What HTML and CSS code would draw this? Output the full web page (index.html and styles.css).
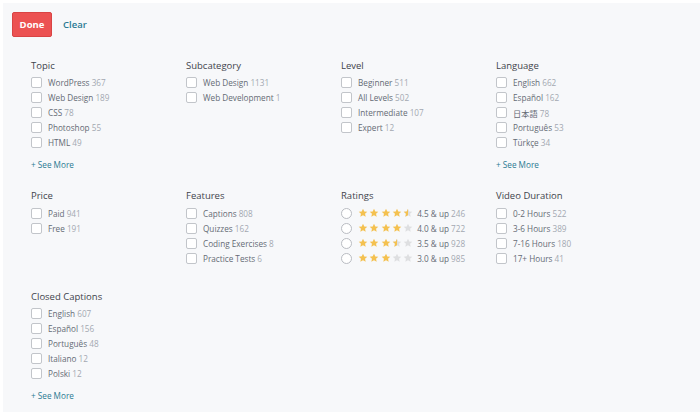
FILE: index.html
```html
<!DOCTYPE html>
<html>
<head>
<meta charset="utf-8">
<link rel="stylesheet" href="styles.css">
</head>
<body>
<svg class="defs" width="0" height="0">
  <defs>
    <symbol id="star" viewBox="0 0 24 24"><path d="M12 1.5l3.1 6.6 7.2.8-5.4 4.9 1.5 7.1L12 17.3l-6.4 3.6 1.5-7.1-5.4-4.9 7.2-.8z"/></symbol>
    <clipPath id="half"><rect x="0" y="0" width="12" height="24"/></clipPath>
  </defs>
</svg>
<div class="panel">
  <div class="actions">
    <button class="btn-done">Done</button>
    <a class="btn-clear">Clear</a>
  </div>
  <div class="grid">
    <div class="section">
      <div class="title">Topic</div>
      <ul class="list">
        <li class="item"><span class="box"></span><span class="label">WordPress <span class="count">367</span></span></li>
        <li class="item"><span class="box"></span><span class="label">Web Design <span class="count">189</span></span></li>
        <li class="item"><span class="box"></span><span class="label">CSS <span class="count">78</span></span></li>
        <li class="item"><span class="box"></span><span class="label">Photoshop <span class="count">55</span></span></li>
        <li class="item"><span class="box"></span><span class="label">HTML <span class="count">49</span></span></li>
      </ul>
      <a class="more">+ See More</a>
    </div>
    <div class="section">
      <div class="title">Subcategory</div>
      <ul class="list">
        <li class="item"><span class="box"></span><span class="label">Web Design <span class="count">1131</span></span></li>
        <li class="item"><span class="box"></span><span class="label">Web Development <span class="count">1</span></span></li>
      </ul>
    </div>
    <div class="section">
      <div class="title">Level</div>
      <ul class="list">
        <li class="item"><span class="box"></span><span class="label">Beginner <span class="count">511</span></span></li>
        <li class="item"><span class="box"></span><span class="label">All Levels <span class="count">502</span></span></li>
        <li class="item"><span class="box"></span><span class="label">Intermediate <span class="count">107</span></span></li>
        <li class="item"><span class="box"></span><span class="label">Expert <span class="count">12</span></span></li>
      </ul>
    </div>
    <div class="section">
      <div class="title">Language</div>
      <ul class="list">
        <li class="item"><span class="box"></span><span class="label">English <span class="count">662</span></span></li>
        <li class="item"><span class="box"></span><span class="label">Español <span class="count">162</span></span></li>
        <li class="item"><span class="box"></span><span class="label">日本語 <span class="count">78</span></span></li>
        <li class="item"><span class="box"></span><span class="label">Português <span class="count">53</span></span></li>
        <li class="item"><span class="box"></span><span class="label">Türkçe <span class="count">34</span></span></li>
      </ul>
      <a class="more">+ See More</a>
    </div>

    <div class="section">
      <div class="title">Price</div>
      <ul class="list">
        <li class="item"><span class="box"></span><span class="label">Paid <span class="count">941</span></span></li>
        <li class="item"><span class="box"></span><span class="label">Free <span class="count">191</span></span></li>
      </ul>
    </div>
    <div class="section">
      <div class="title">Features</div>
      <ul class="list">
        <li class="item"><span class="box"></span><span class="label">Captions <span class="count">808</span></span></li>
        <li class="item"><span class="box"></span><span class="label">Quizzes <span class="count">162</span></span></li>
        <li class="item"><span class="box"></span><span class="label">Coding Exercises <span class="count">8</span></span></li>
        <li class="item"><span class="box"></span><span class="label">Practice Tests <span class="count">6</span></span></li>
      </ul>
    </div>
    <div class="section">
      <div class="title">Ratings</div>
      <ul class="list">
        <li class="item">
          <span class="radio"></span>
          <span class="stars">
            <svg class="star"><use href="#star" class="on"/></svg>
            <svg class="star"><use href="#star" class="on"/></svg>
            <svg class="star"><use href="#star" class="on"/></svg>
            <svg class="star"><use href="#star" class="on"/></svg>
            <svg class="star" viewBox="0 0 24 24"><use href="#star" class="off"/><g clip-path="url(#half)"><use href="#star" class="on"/></g></svg>
          </span>
          <span class="label">4.5 &amp; up <span class="count">246</span></span>
        </li>
        <li class="item">
          <span class="radio"></span>
          <span class="stars">
            <svg class="star"><use href="#star" class="on"/></svg>
            <svg class="star"><use href="#star" class="on"/></svg>
            <svg class="star"><use href="#star" class="on"/></svg>
            <svg class="star"><use href="#star" class="on"/></svg>
            <svg class="star"><use href="#star" class="off"/></svg>
          </span>
          <span class="label">4.0 &amp; up <span class="count">722</span></span>
        </li>
        <li class="item">
          <span class="radio"></span>
          <span class="stars">
            <svg class="star"><use href="#star" class="on"/></svg>
            <svg class="star"><use href="#star" class="on"/></svg>
            <svg class="star"><use href="#star" class="on"/></svg>
            <svg class="star" viewBox="0 0 24 24"><use href="#star" class="off"/><g clip-path="url(#half)"><use href="#star" class="on"/></g></svg>
            <svg class="star"><use href="#star" class="off"/></svg>
          </span>
          <span class="label">3.5 &amp; up <span class="count">928</span></span>
        </li>
        <li class="item">
          <span class="radio"></span>
          <span class="stars">
            <svg class="star"><use href="#star" class="on"/></svg>
            <svg class="star"><use href="#star" class="on"/></svg>
            <svg class="star"><use href="#star" class="on"/></svg>
            <svg class="star"><use href="#star" class="off"/></svg>
            <svg class="star"><use href="#star" class="off"/></svg>
          </span>
          <span class="label">3.0 &amp; up <span class="count">985</span></span>
        </li>
      </ul>
    </div>
    <div class="section">
      <div class="title">Video Duration</div>
      <ul class="list">
        <li class="item"><span class="box"></span><span class="label">0-2 Hours <span class="count">522</span></span></li>
        <li class="item"><span class="box"></span><span class="label">3-6 Hours <span class="count">389</span></span></li>
        <li class="item"><span class="box"></span><span class="label">7-16 Hours <span class="count">180</span></span></li>
        <li class="item"><span class="box"></span><span class="label">17+ Hours <span class="count">41</span></span></li>
      </ul>
    </div>

    <div class="section">
      <div class="title">Closed Captions</div>
      <ul class="list">
        <li class="item"><span class="box"></span><span class="label">English <span class="count">607</span></span></li>
        <li class="item"><span class="box"></span><span class="label">Español <span class="count">156</span></span></li>
        <li class="item"><span class="box"></span><span class="label">Português <span class="count">48</span></span></li>
        <li class="item"><span class="box"></span><span class="label">Italiano <span class="count">12</span></span></li>
        <li class="item"><span class="box"></span><span class="label">Polski <span class="count">12</span></span></li>
      </ul>
      <a class="more">+ See More</a>
    </div>
  </div>
</div>
</body>
</html>
```

FILE: styles.css
```css
html, body {
  margin: 0;
  padding: 0;
  background: #ffffff;
  height: 100%;
}
body {
  font-family: "Open Sans", "Noto Sans CJK JP", sans-serif;
  overflow: hidden;
}
.defs {
  position: absolute;
  width: 0;
  height: 0;
}
.panel {
  margin: 3px 0 0 3px;
  background: #f7f8fa;
  height: calc(100% - 3px);
  box-sizing: border-box;
  padding: 9px 0 0 9px;
}
.actions {
  display: flex;
  align-items: center;
  height: 25px;
}
.btn-done {
  height: 25px;
  width: 40px;
  padding: 0;
  background: #ec5252;
  border: 1px solid #d94444;
  border-radius: 2px;
  color: #ffffff;
  font-family: "Open Sans", sans-serif;
  font-weight: 700;
  font-size: 9.5px;
}
.btn-clear {
  margin-left: 11px;
  color: #2b7a93;
  font-size: 9.5px;
  font-weight: 600;
}
.grid {
  display: grid;
  grid-template-columns: repeat(4, 155px);
  row-gap: 18px;
  margin: 21.5px 0 0 19px;
}
.title {
  font-size: 9.5px;
  line-height: 13px;
  color: #3f444c;
  margin-bottom: 3.5px;
}
.list {
  list-style: none;
  margin: 0;
  padding: 0 0 6px 0;
}
.item {
  display: flex;
  align-items: center;
  height: 15px;
  font-size: 8.2px;
  color: #656b75;
}
.box {
  width: 11px;
  height: 11px;
  box-sizing: border-box;
  border: 1px solid #c2c5ca;
  border-radius: 2px;
  background: #ffffff;
  margin-right: 6px;
  flex: none;
}
.radio {
  width: 11px;
  height: 11px;
  box-sizing: border-box;
  border: 1px solid #b9bcc2;
  border-radius: 50%;
  background: #ffffff;
  margin-right: 6px;
  flex: none;
}
.count {
  color: #a3a8b1;
}
.stars {
  display: flex;
  gap: 1.3px;
  margin-right: 4px;
}
.star {
  width: 10px;
  height: 10px;
  display: block;
}
.on {
  fill: #f4c150;
}
.off {
  fill: #dedfe1;
}
.more {
  display: block;
  margin-top: 2px;
  font-size: 8.2px;
  line-height: 13px;
  color: #2b7a93;
}
```
